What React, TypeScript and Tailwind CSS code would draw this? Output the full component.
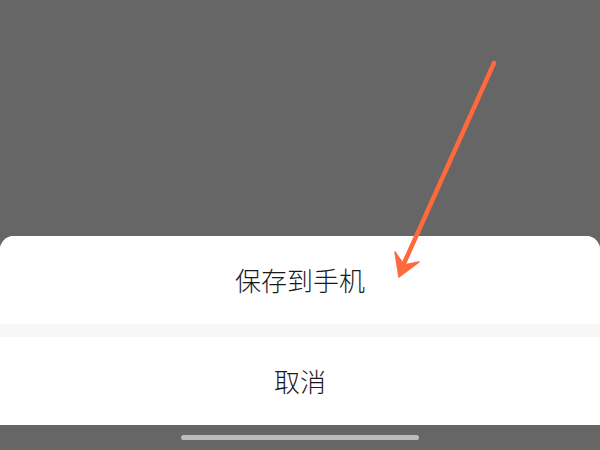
function Arrow() {
  return (
    <svg className="absolute inset-0 pointer-events-none" width="600" height="450" viewBox="0 0 600 450">
      <line x1="494" y1="63" x2="401" y2="270" stroke="#ff6a3d" strokeWidth="4.5" strokeLinecap="round" />
      <path d="M399 277 L395 252 L404 265 L419 262 Z" fill="#ff6a3d" stroke="#ff6a3d" strokeWidth="1.5" strokeLinejoin="round" />
    </svg>
  );
}

function SheetRow({ label }: { label: string }) {
  return (
    <div className="h-[88px] flex items-center justify-center bg-white">
      <p className="font-['Noto_Sans_CJK_SC','Noto_Sans',sans-serif] font-light text-[26px] leading-none text-[#1a1a1a]">{label}</p>
    </div>
  );
}

export default function App() {
  return (
    <div className="relative w-[600px] h-[450px] bg-[#666666] flex flex-col justify-end overflow-hidden">
      <div className="bg-white rounded-t-[14px] overflow-hidden flex flex-col">
        <SheetRow label="保存到手机" />
        <div className="h-[13px] bg-[#f7f7f7]" />
        <SheetRow label="取消" />
      </div>
      <div className="h-[25px] flex justify-center pt-[10px]">
        <div className="w-[238px] h-[5px] rounded-full bg-[#bdbdbd]" />
      </div>
      <Arrow />
    </div>
  );
}
